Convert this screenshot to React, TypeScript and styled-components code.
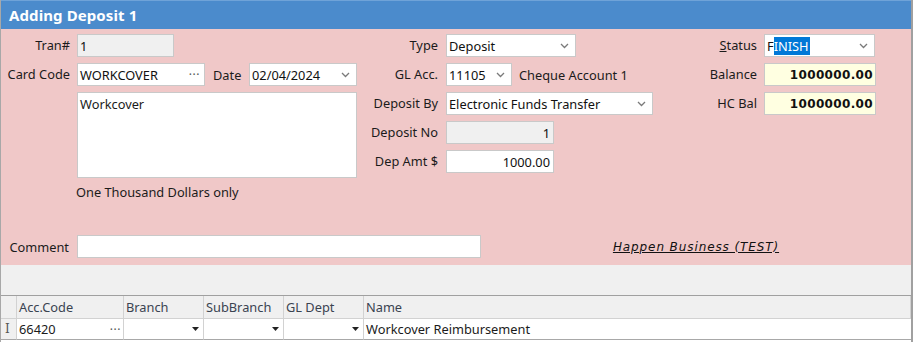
import React from "react";
import styled, { createGlobalStyle } from "styled-components";

const Global = createGlobalStyle`
  html, body { margin: 0; padding: 0; background: #fff; }
  body { font-family: "Noto Sans", "Open Sans", sans-serif; font-size: 12.8px; color: #1b1b1b; }
  * { box-sizing: border-box; }
`;

const Window = styled.div`
  width: 913px;
  height: 342px;
  border-left: 1px solid #a8a8a8;
  border-right: 2px solid #a0a0a0;
  display: flex;
  flex-direction: column;
  overflow: hidden;
`;

const TitleBar = styled.div`
  height: 29px;
  background: #4b8bcc;
  border-top: 1px solid #6fa3d8;
  color: #fff;
  font-weight: 700;
  font-size: 15px;
  padding-left: 8px;
  display: flex;
  align-items: center;
  letter-spacing: 0.1px;
`;

const Panel = styled.div`
  height: 236px;
  background: #f0c8c8;
  padding: 5px 0 7px 0;
  display: flex;
  flex-direction: column;
`;

const Columns = styled.div`
  display: flex;
  align-items: flex-start;
`;

const FieldGrid = styled.div<{ $label: number; $gap: number; $width: number }>`
  display: grid;
  grid-template-columns: ${(p) => p.$label}px 1fr;
  column-gap: ${(p) => p.$gap}px;
  row-gap: 6px;
  width: ${(p) => p.$width}px;
  align-items: center;
`;

const Label = styled.div`
  text-align: right;
  white-space: nowrap;
  line-height: 23px;
`;

const Box = styled.div<{ $w: number; $h?: number; $bg?: string; $align?: string; $bold?: boolean }>`
  width: ${(p) => p.$w}px;
  height: ${(p) => p.$h ?? 23}px;
  background: ${(p) => p.$bg ?? "#fff"};
  border: 1px solid #c9c9c9;
  display: flex;
  align-items: center;
  justify-content: ${(p) => p.$align ?? "flex-start"};
  padding: 0 ${(p) => (p.$align === "flex-end" ? 3 : 6)}px 0 2px;
  white-space: nowrap;
  color: #111;
  ${(p) =>
    p.$bold
      ? `font-family: "DejaVu Sans", sans-serif; font-weight: 700; font-size: 12px; letter-spacing: 0.35px; padding-right: 2px;`
      : ""}
`;

const Memo = styled.div`
  width: 280px;
  height: 86px;
  background: #fff;
  border: 1px solid #c9c9c9;
  padding: 2px 2px;
  grid-column: 2;
`;

const Spacer = styled.span`
  flex: 1;
`;

const Dots = styled.span`
  color: #555;
  letter-spacing: 0.5px;
  font-size: 12px;
  margin-right: -2px;
`;

const Inline = styled.div`
  display: flex;
  align-items: center;
`;

const InlineLabel = styled.span<{ $ml: number; $w?: number }>`
  margin-left: ${(p) => p.$ml}px;
  ${(p) => (p.$w ? `width: ${p.$w}px;` : "")}
  white-space: nowrap;
`;

const Words = styled.div`
  grid-column: 2;
  margin-top: -1px;
  margin-left: -1px;
`;

const Selected = styled.span`
  background: #0078d7;
  color: #fff;
  padding: 0 1px 0 0;
`;

const CommentRow = styled.div`
  margin-top: auto;
  display: flex;
  align-items: center;
`;

const CommentLabel = styled.div`
  width: 68px;
  text-align: right;
  margin-right: 8px;
`;

const LinkArea = styled.div`
  flex: 1;
  display: flex;
  justify-content: center;
`;

const Link = styled.span`
  font-family: "DejaVu Sans", sans-serif;
  font-style: italic;
  text-decoration: underline;
  font-size: 12px;
  color: #111;
  letter-spacing: 0.9px;
`;

const GrayBand = styled.div`
  height: 31px;
  background: #f0f0f0;
  border-bottom: 1px solid #a0a0a0;
`;

const Grid = styled.div`
  display: grid;
  grid-template-columns: 16px 107px 80px 80px 80px 1fr;
`;

const HeadCell = styled.div`
  height: 23px;
  background: #f0f0f0;
  border-right: 1px solid #d2d2d2;
  border-bottom: 1px solid #d2d2d2;
  display: flex;
  align-items: center;
  padding-left: 2px;
  color: #3a4350;
  &:last-child { border-right: none; }
`;

const Cell = styled.div`
  height: 21px;
  background: #fff;
  border-right: 1px solid #d2d2d2;
  border-bottom: 1px solid #a8a8a8;
  display: flex;
  align-items: center;
  padding: 0 4px 0 2px;
  white-space: nowrap;
  &:last-child { border-right: none; }
`;

const Indicator = styled(Cell)`
  background: #f0f0f0;
  padding: 0 0 0 4px;
  color: #555;
  font-family: "DejaVu Serif", serif;
  font-size: 12px;
`;

const Chevron = () => (
  <svg width="9" height="6" viewBox="0 0 9 6" style={{ flex: "none" }}>
    <polyline points="1,1 4.5,4.5 8,1" fill="none" stroke="#7a7a7a" strokeWidth="1.3" />
  </svg>
);

const Tri = () => (
  <svg width="7" height="4" viewBox="0 0 7 4" style={{ flex: "none" }}>
    <polygon points="0,0 7,0 3.5,4" fill="#222" />
  </svg>
);

export default function App() {
  return (
    <>
      <Global />
      <Window>
        <TitleBar>Adding Deposit 1</TitleBar>
        <Panel>
          <Columns>
            <FieldGrid $label={69} $gap={7} $width={359}>
              <Label>Tran#</Label>
              <Box $w={97} $bg="#f0f0f0">1</Box>
              <Label>Card Code</Label>
              <Inline>
                <Box $w={128}>
                  WORKCOVER<Spacer />
                  <Dots>···</Dots>
                </Box>
                <InlineLabel $ml={8} $w={36}>Date</InlineLabel>
                <Box $w={108}>
                  02/04/2024<Spacer />
                  <Chevron />
                </Box>
              </Inline>
              <Memo>Workcover</Memo>
              <Words>One Thousand Dollars only</Words>
            </FieldGrid>
            <FieldGrid $label={78} $gap={8} $width={318}>
              <Label>Type</Label>
              <Box $w={130}>
                Deposit<Spacer />
                <Chevron />
              </Box>
              <Label>GL Acc.</Label>
              <Inline>
                <Box $w={66}>
                  11105<Spacer />
                  <Chevron />
                </Box>
                <InlineLabel $ml={7}>Cheque Account 1</InlineLabel>
              </Inline>
              <Label>Deposit By</Label>
              <Box $w={207}>
                Electronic Funds Transfer<Spacer />
                <Chevron />
              </Box>
              <Label>Deposit No</Label>
              <Box $w={108} $bg="#f0f0f0" $align="flex-end">1</Box>
              <Label>Dep Amt $</Label>
              <Box $w={108} $align="flex-end">1000.00</Box>
            </FieldGrid>
            <FieldGrid $label={79} $gap={7} $width={200}>
              <Label>
                <u>S</u>tatus
              </Label>
              <Box $w={111}>
                F<Selected>INISH</Selected>
                <Spacer />
                <Chevron />
              </Box>
              <Label>Balance</Label>
              <Box $w={112} $bg="#ffffe1" $align="flex-end" $bold>1000000.00</Box>
              <Label>HC Bal</Label>
              <Box $w={112} $bg="#ffffe1" $align="flex-end" $bold>1000000.00</Box>
            </FieldGrid>
          </Columns>
          <CommentRow>
            <CommentLabel>Comment</CommentLabel>
            <Box $w={404} />
            <LinkArea>
              <Link>Happen Business (TEST)</Link>
            </LinkArea>
          </CommentRow>
        </Panel>
        <GrayBand />
        <Grid>
          <HeadCell />
          <HeadCell>Acc.Code</HeadCell>
          <HeadCell>Branch</HeadCell>
          <HeadCell>SubBranch</HeadCell>
          <HeadCell>GL Dept</HeadCell>
          <HeadCell>Name</HeadCell>
          <Indicator>I</Indicator>
          <Cell>
            66420<Spacer />
            <Dots>···</Dots>
          </Cell>
          <Cell>
            <Spacer />
            <Tri />
          </Cell>
          <Cell>
            <Spacer />
            <Tri />
          </Cell>
          <Cell>
            <Spacer />
            <Tri />
          </Cell>
          <Cell>Workcover Reimbursement</Cell>
        </Grid>
      </Window>
    </>
  );
}
